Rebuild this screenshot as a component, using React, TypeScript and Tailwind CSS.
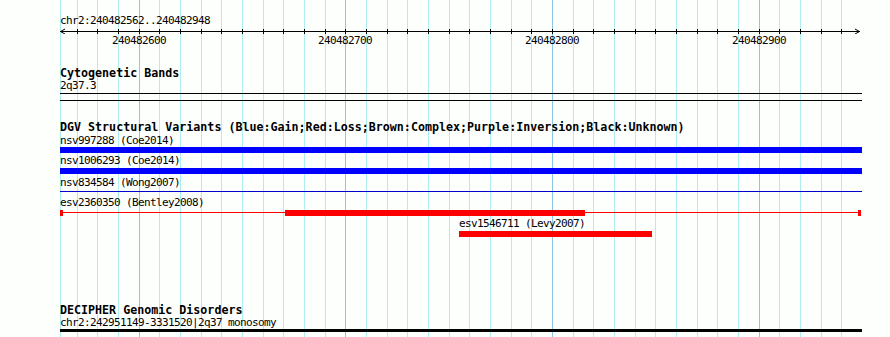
import React from "react";

const ORIGIN = 240482600;
const toX = (bp: number) => Math.floor(139.33 + (bp - ORIGIN) * 2.06667);

const ticks: { bp: number; x: number; major: boolean }[] = [];
for (let bp = 240482570; bp <= 240482940; bp += 10) {
  ticks.push({ bp, x: toX(bp), major: bp % 100 === 0 });
}

const mono = "font-['DejaVu_Sans_Mono',monospace] text-[11px] tracking-[-0.62px] leading-[12px] h-[12px] whitespace-nowrap text-black";
const bold = "font-['DejaVu_Sans_Mono',monospace] font-bold text-[11.67px] leading-[13px] h-[13px] whitespace-nowrap text-black";

function Ruler() {
  return (
    <svg width={802} height={6} className="block mt-[1px]" shapeRendering="crispEdges">
      <line x1={0} y1={3.5} x2={800} y2={3.5} stroke="#000" strokeWidth={1} />
      <polyline points="5,1 0.5,3.5 5,6" fill="none" stroke="#000" strokeWidth={1} shapeRendering="auto" />
      <polyline points="795,1 799.5,3.5 795,6" fill="none" stroke="#000" strokeWidth={1} shapeRendering="auto" />
      {ticks.map((t) => (
        <line key={t.bp} x1={t.x - 60 + 0.5} y1={1} x2={t.x - 60 + 0.5} y2={6} stroke="#000" strokeWidth={1} />
      ))}
    </svg>
  );
}

export default function App() {
  return (
    <div className="relative w-[890px] h-[337px] bg-[#fdfffd] overflow-hidden">
      {/* grid */}
      <div className="absolute inset-0">
        <div className="absolute top-0 bottom-0 left-[60px] w-px bg-[#afeeee]" />
        {ticks.map((t) => (
          <div
            key={t.bp}
            className={`absolute top-0 bottom-0 w-px ${t.major ? "bg-[#8cc8e6]" : "bg-[#afeeee]"}`}
            style={{ left: t.x }}
          />
        ))}
      </div>

      {/* tracks */}
      <div className="relative ml-[60px] w-[802px] flex flex-col">
        <div className={`${mono} mt-[15px]`}>chr2:240482562..240482948</div>
        <Ruler />
        <div className="relative h-[12px]">
          {ticks
            .filter((t) => t.major)
            .map((t) => (
              <div
                key={t.bp}
                className={`${mono} absolute top-[1px] w-[56px] text-center`}
                style={{ left: t.x - 60 - 28 }}
              >
                {t.bp}
              </div>
            ))}
        </div>

        <div className={`${bold} mt-[21px]`}>Cytogenetic Bands</div>
        <div className={mono}>2q37.3</div>
        <div className="mt-[1px] h-px bg-black" />
        <div className="mt-[6px] h-px bg-black" />

        <div className={`${bold} mt-[20px]`}>
          DGV Structural Variants (Blue:Gain;Red:Loss;Brown:Complex;Purple:Inversion;Black:Unknown)
        </div>
        <div className={`${mono} mt-[1px]`}>nsv997288 (Coe2014)</div>
        <div className="h-[6px] bg-[#0000ff]" />
        <div className={`${mono} mt-[2px]`}>nsv1006293 (Coe2014)</div>
        <div className="mt-[1px] h-[6px] bg-[#0000ff]" />
        <div className={`${mono} mt-[3px]`}>nsv834584 (Wong2007)</div>
        <div className="mt-[2px] h-px bg-[#0000cc]" />
        <div className={`${mono} mt-[5px]`}>esv2360350 (Bentley2008)</div>
        <div className="mt-[1px] h-[6px] w-[801px] flex items-start">
          <div className="w-[3px] h-[6px] bg-[#ff0000]" />
          <div className="mt-[2px] w-[222px] h-px bg-[#ff0000]" />
          <div className="w-[300px] h-[6px] bg-[#ff0000]" />
          <div className="mt-[2px] flex-1 h-px bg-[#ff0000]" />
          <div className="w-[3px] h-[6px] bg-[#ff0000]" />
        </div>
        <div className={`${mono} mt-[2px] ml-[399px]`}>esv1546711 (Levy2007)</div>
        <div className="mt-[1px] ml-[399px] w-[193px] h-[6px] bg-[#ff0000]" />

        <div className={`${bold} mt-[67px]`}>DECIPHER Genomic Disorders</div>
        <div className={`${mono} mt-[0px]`}>chr2:242951149-3331520|2q37 monosomy</div>
        <div className="h-[3px] bg-black" />
      </div>
    </div>
  );
}
